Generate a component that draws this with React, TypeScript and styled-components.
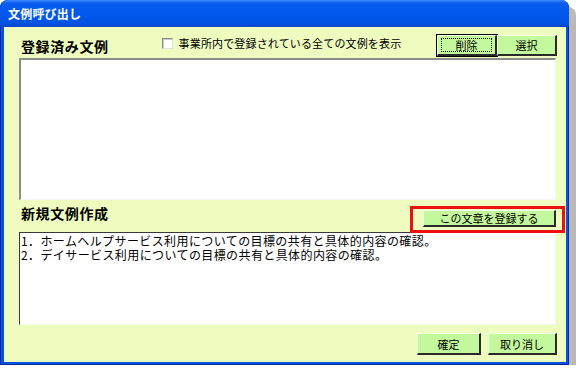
import React from "react";
import styled, { createGlobalStyle } from "styled-components";

const Global = createGlobalStyle`
  html, body { margin: 0; padding: 0; background: #ffffff; }
  body { font-family: "Noto Sans CJK JP", "Noto Sans", sans-serif; color: #000; }
`;

const Window = styled.div`
  width: 569px;
  height: 365px;
  display: flex;
  flex-direction: column;
  border-radius: 8px 8px 0 0;
  background: #0553e4;
  box-shadow: 7px 7px 0 #b9b9b9, inset 0 0 0 1px #0a2a9c;
  overflow: hidden;
`;

const TitleBar = styled.div`
  height: 27px;
  flex: none;
  display: flex;
  align-items: center;
  padding-left: 8px;
  background: linear-gradient(#3a8cff 0%, #0b5cf0 12%, #0058ec 50%, #0054e4 85%, #0a45c8 100%);
  color: #fff;
  font-size: 12px;
  font-weight: bold;
  letter-spacing: 0.2px;
`;

const Body = styled.div`
  flex: 1;
  margin: 0 3px 3px 4px;
  background: #eefcc0;
  display: flex;
  flex-direction: column;
  padding: 0 10px 0 15px;
`;

const TopRow = styled.div`
  display: flex;
  align-items: center;
  height: 21px;
  margin-top: 8px;
  margin-bottom: 2px;
`;

const SectionLabel = styled.div`
  font-size: 14px;
  font-weight: bold;
  letter-spacing: 0.6px;
  line-height: 16px;
  margin-left: 2px;
`;

const CheckLabel = styled.label`
  display: flex;
  align-items: center;
  margin-left: 53px;
  margin-bottom: 5px;
  font-size: 11px;
  letter-spacing: 0.15px;
  gap: 6px;
`;

const CheckBox = styled.span`
  width: 9px;
  height: 9px;
  background: #fff;
  border-top: 1px solid #8a8a8a;
  border-left: 1px solid #8a8a8a;
  border-right: 1px solid #e0e0e0;
  border-bottom: 1px solid #e0e0e0;
  box-shadow: inset 1px 1px 0 #c8c8c8;
`;

const ButtonGroup = styled.div`
  margin-left: auto;
  margin-right: -1px;
  display: flex;
`;

const Btn = styled.button<{ $w: number; $h: number; $focus?: boolean }>`
  width: ${(p) => p.$w}px;
  height: ${(p) => p.$h}px;
  padding: 0;
  background: #c4f89c;
  font-family: "Noto Sans CJK JP", sans-serif;
  font-size: 11px;
  color: #000;
  border-top: 1px solid #f2ffe6;
  border-left: 1px solid #f2ffe6;
  border-right: 2px solid #2a2a2a;
  border-bottom: 2px solid #2a2a2a;
  outline: ${(p) => (p.$focus ? "1px solid #000" : "none")};
  outline-offset: 0;
  display: flex;
  align-items: center;
  justify-content: center;
  position: relative;
  box-sizing: border-box;
`;

const FocusRing = styled.span`
  position: absolute;
  inset: 2px 3px 2px 3px;
  border: 1px dotted #000;
`;

const ListBox = styled.div<{ $h: number }>`
  height: ${(p) => p.$h}px;
  flex: none;
  background: #fff;
  border-top: 2px solid #8c8c8c;
  border-left: 2px solid #8c8c8c;
  border-right: 1px solid #f4f4f4;
  border-bottom: 1px solid #f4f4f4;
  box-sizing: border-box;
`;

const MidRow = styled.div`
  display: flex;
  align-items: flex-start;
  height: 32px;
  flex: none;
`;

const MidLabel = styled(SectionLabel)`
  margin-top: 5px;
`;

const RegisterWrap = styled.div`
  margin-left: auto;
  margin-top: 10px;
  position: relative;
`;

const Highlight = styled.div`
  position: absolute;
  left: -13px;
  right: -9px;
  top: -4px;
  bottom: -6px;
  border: 3px solid #ee1010;
  pointer-events: none;
`;

const TextArea = styled.div`
  height: 93px;
  flex: none;
  background: #fff;
  border-top: 1px solid #3a3a3a;
  border-left: 1px solid #3a3a3a;
  border-right: 1px solid #f4f4f4;
  border-bottom: 1px solid #f4f4f4;
  box-sizing: border-box;
  padding: 1px 1px;
  font-size: 12px;
  line-height: 14px;
  letter-spacing: 0.4px;
`;

const Line = styled.div`
  height: 14px;
  white-space: nowrap;
`;

const Footer = styled.div`
  display: flex;
  justify-content: flex-end;
  gap: 7px;
  margin-top: 8px;
  margin-right: -1px;
`;

export default function App() {
  return (
    <>
      <Global />
      <Window>
        <TitleBar>文例呼び出し</TitleBar>
        <Body>
          <TopRow>
            <SectionLabel>登録済み文例</SectionLabel>
            <CheckLabel>
              <CheckBox />
              事業所内で登録されている全ての文例を表示
            </CheckLabel>
            <ButtonGroup>
              <Btn $w={60} $h={21} $focus>
                <FocusRing />
                削除
              </Btn>
              <Btn $w={60} $h={21}>選択</Btn>
            </ButtonGroup>
          </TopRow>
          <ListBox $h={142} />
          <MidRow>
            <MidLabel>新規文例作成</MidLabel>
            <RegisterWrap>
              <Btn $w={133} $h={17}>この文章を登録する</Btn>
              <Highlight />
            </RegisterWrap>
          </MidRow>
          <TextArea>
            <Line>1．ホームヘルプサービス利用についての目標の共有と具体的内容の確認。</Line>
            <Line>2．デイサービス利用についての目標の共有と具体的内容の確認。</Line>
          </TextArea>
          <Footer>
            <Btn $w={64} $h={22}>確定</Btn>
            <Btn $w={69} $h={22}>取り消し</Btn>
          </Footer>
        </Body>
      </Window>
    </>
  );
}
